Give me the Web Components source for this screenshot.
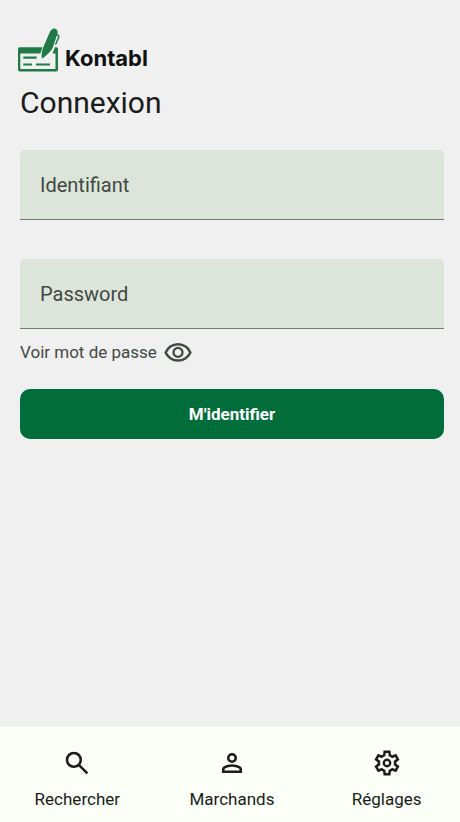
<!DOCTYPE html>
<html lang="fr">
<head>
<meta charset="utf-8">
<meta name="viewport" content="width=device-width, initial-scale=1">
<title>Kontabl – Connexion</title>
<style>
  body { margin: 0; background: #f0f0f0; color: #191c1a; font-family: Roboto, "Liberation Sans", sans-serif; overflow-x: hidden; }
</style>
</head>
<body>
<app-shell>
  <app-logo slot="header"></app-logo>
  <login-form></login-form>
  <nav-bar slot="footer">
    <nav-item icon="search" href="#rechercher">Rechercher</nav-item>
    <nav-item icon="person" href="#marchands">Marchands</nav-item>
    <nav-item icon="settings" href="#reglages">Réglages</nav-item>
  </nav-bar>
</app-shell>
<script>
class BaseElement extends HTMLElement {
  render(html) {
    const t = document.createElement('template');
    t.innerHTML = '<style>*{box-sizing:border-box}</style>' + html;
    this.attachShadow({ mode: 'open' }).append(t.content.cloneNode(true));
  }
}

const ICONS = {
  search: '<path d="M784-120 532-372q-30 24-69 38t-83 14q-109 0-184.5-75.5T120-580q0-109 75.5-184.5T380-840q109 0 184.5 75.5T640-580q0 44-14 83t-38 69l252 252-56 56ZM380-400q75 0 127.5-52.5T560-580q0-75-52.5-127.5T380-760q-75 0-127.5 52.5T200-580q0 75 52.5 127.5T380-400Z"/>',
  person: '<path d="M480-480q-66 0-113-47t-47-113q0-66 47-113t113-47q66 0 113 47t47 113q0 66-47 113t-113 47ZM160-160v-112q0-34 17.5-62.5T224-378q62-31 126-46.5T480-440q66 0 130 15.5T736-378q29 15 46.5 43.5T800-272v112H160Zm80-80h480v-32q0-11-5.5-20T700-306q-54-27-109-40.5T480-360q-56 0-111 13.5T260-306q-9 5-14.5 14t-5.5 20v32Zm240-320q33 0 56.5-23.5T560-640q0-33-23.5-56.5T480-720q-33 0-56.5 23.5T400-640q0 33 23.5 56.5T480-560Z"/>',
  settings: '<path d="m370-80-16-128q-13-5-24.500-12T307-235l-119 50L78-375l103-78q-1-7-1-13.500v-27q0-6.500 1-13.500L78-585l110-190 119 50q11-8 23-15t24-12l16-128h220l16 128q13 5 24.500 12t22.500 15l119-50 110 190-103 78q1 7 1 13.500v27q0 6.500-2 13.500l103 78-110 190-118-50q-11 8-23 15t-24 12L590-80H370Zm70-80h79l14-106q31-8 57.500-23.500T639-327l99 41 39-68-86-65q5-14 7-29.500t2-31.500q0-16-2-31.500t-7-29.500l86-65-39-68-99 42q-22-23-48.500-38.500T533-694l-13-106h-79l-14 106q-31 8-57.500 23.500T321-633l-99-41-39 68 86 64q-5 15-7 30t-2 32q0 16 2 31t7 30l-86 65 39 68 99-42q22 23 48.500 38.500T427-266l13 106Z"/><circle cx="480" cy="-480" r="104" fill="none" stroke="currentColor" stroke-width="74"/>',
  visibility: '<path d="M480-320q75 0 127.500-52.500T660-500q0-75-52.500-127.500T480-680q-75 0-127.500 52.500T300-500q0 75 52.500 127.500T480-320Zm0-72q-45 0-76.500-31.500T372-500q0-45 31.500-76.500T480-608q45 0 76.500 31.500T588-500q0 45-31.500 76.500T480-392Zm0 192q-146 0-266-81.500T40-500q54-137 174-218.500T480-800q146 0 266 81.500T920-500q-54 137-174 218.500T480-200Zm0-80q113 0 207.500-59.500T832-500q-50-101-144.500-160.500T480-720q-113 0-207.500 59.500T128-500q50 101 144.500 160.500T480-280Z"/>'
};

customElements.define('app-icon', class extends BaseElement {
  connectedCallback() {
    if (this.shadowRoot) return;
    this.render(`<style>
      :host { display: block; width: 30px; height: 30px; flex: none; }
      svg { display: block; width: 100%; height: 100%; fill: currentColor; }
    </style><svg viewBox="0 -960 960 960" aria-hidden="true">${ICONS[this.getAttribute('name')]}</svg>`);
  }
});

customElements.define('app-shell', class extends BaseElement {
  constructor() {
    super();
    this.render(`<style>
      :host { display: flex; flex-direction: column; min-height: 100vh; width: calc(100% + 4px); }
      header { padding: 28px 18px 0; }
      main { flex: 1; padding: 12px 20px 24px; }
    </style>
    <header><slot name="header"></slot></header>
    <main><slot></slot></main>
    <slot name="footer"></slot>`);
  }
});

customElements.define('app-logo', class extends BaseElement {
  constructor() {
    super();
    this.render(`<style>
      :host { display: flex; align-items: flex-end; gap: 5px; color: #111; }
      svg { display: block; width: 42px; height: 44px; flex: none; }
      span { font: 700 22px/28px Inter, sans-serif; }
    </style>
    <svg viewBox="0 0 42 44" aria-hidden="true">
      <path fill="#1f7a45" fill-rule="evenodd" d="M1.500 19.300H24.500L22.300 25.500H2.300V41H37.500V25.500H34.500L37 19.300H38.500Q40 19.300 40 21V41.500Q40 43.500 38 43.500H2Q0 43.500 0 41.500V21Q0 19.300 1.500 19.300Z"/>
      <path fill="none" stroke="#1f7a45" stroke-width="2.200" d="M5.300 29.700H18.700M5.300 36.500H14M18 36.500H32"/>
      <path fill="#1f7a45" d="M31.200 5.500Q33.500 .2 36.800 .6Q40.300 1.700 39.500 5.500L34.800 19.500Q33 24 24 30.800Q22.700 24.500 26 17.500Z"/>
      <path fill="none" stroke="#1f7a45" stroke-width="1.500" stroke-linecap="round" d="M38.500 7Q41.300 6.500 40.800 9L37.800 16"/>
    </svg><span>Kontabl</span>`);
  }
});

customElements.define('text-field', class extends BaseElement {
  connectedCallback() {
    if (this.shadowRoot) return;
    this.render(`<style>
      :host { display: grid; background: #dde5db; border-radius: 5px 5px 0 0; border-bottom: 1px solid #717971; color: #414941; }
      label, input { grid-area: 1 / 1; }
      label { align-self: center; padding: 0 20px; font-size: 20px; line-height: 24px; pointer-events: none; }
      input { width: 100%; height: 69px; padding: 16px 20px 0; border: 0; outline: 0; background: none; color: inherit; font: inherit; font-size: 20px; }
      input:focus + label, input:not(:placeholder-shown) + label { align-self: start; padding-top: 6px; font-size: 14px; }
    </style>
    <input id="f" type="${this.getAttribute('type')}" placeholder=" "><label for="f">${this.getAttribute('label')}</label>`);
  }
  set type(v) { this.shadowRoot.querySelector('input').type = v; }
  get type() { return this.shadowRoot.querySelector('input').type; }
});

customElements.define('login-form', class extends BaseElement {
  constructor() {
    super();
    this.render(`<style>
      :host { display: block; }
      h1 { margin: 0 0 28px; font-size: 30px; line-height: 38px; font-weight: 400; }
      form { display: flex; flex-direction: column; }
      .password { margin-top: 39px; }
      .reveal { display: flex; align-items: center; align-self: flex-start; gap: 6px; margin: 9px 0 0; padding: 0; border: 0; background: none; color: #414941; font: inherit; font-size: 17px; line-height: 28px; cursor: pointer; }
      .reveal span { padding-bottom: 2px; }
      .submit { height: 50px; margin-top: 21px; border: 0; border-radius: 10px; background: #006d3a; color: #fff; font: inherit; font-size: 17px; font-weight: 700; cursor: pointer; }
    </style>
    <h1>Connexion</h1>
    <form>
      <text-field type="text" label="Identifiant"></text-field>
      <text-field class="password" type="password" label="Password"></text-field>
      <button class="reveal" type="button"><span>Voir mot de passe</span><app-icon name="visibility"></app-icon></button>
      <button class="submit" type="submit">M'identifier</button>
    </form>`);
    const field = this.shadowRoot.querySelector('.password');
    this.shadowRoot.querySelector('.reveal').addEventListener('click', () => {
      field.type = field.type === 'password' ? 'text' : 'password';
    });
    this.shadowRoot.querySelector('form').addEventListener('submit', e => e.preventDefault());
  }
});

customElements.define('nav-bar', class extends BaseElement {
  constructor() {
    super();
    this.render(`<style>
      :host { display: block; background: #fbfff7; }
      nav { display: grid; grid-template-columns: repeat(3, 1fr); }
    </style><nav><slot></slot></nav>`);
  }
});

customElements.define('nav-item', class extends BaseElement {
  connectedCallback() {
    if (this.shadowRoot) return;
    this.render(`<style>
      :host { display: block; }
      a { display: flex; flex-direction: column; align-items: center; gap: 9px; padding: 21px 0 11px; color: #191c1a; text-decoration: none; font-size: 17px; line-height: 24px; }
    </style><a href="${this.getAttribute('href')}"><app-icon name="${this.getAttribute('icon')}"></app-icon><slot></slot></a>`);
  }
});
</script>
</body>
</html>
